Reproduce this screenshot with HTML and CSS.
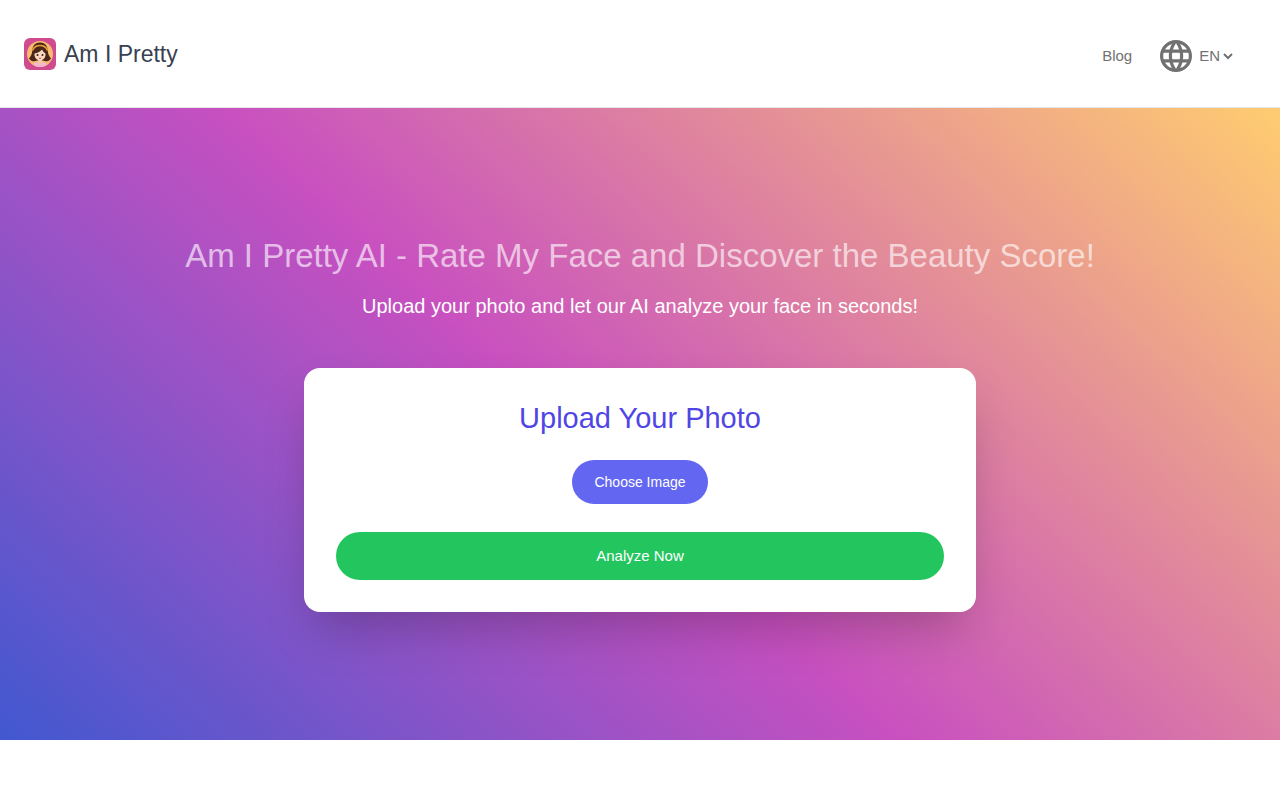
FILE: index.html
```html
<!doctype html>
<html lang="en">
<head>
  <meta charset="utf-8">
  <meta name="viewport" content="width=device-width, initial-scale=1">
  <title>Am I Pretty</title>
  <link rel="stylesheet" href="styles.css">
</head>
<body>
<header class="header">
  <a class="brand" href="#">
    <svg class="brand-logo" viewBox="0 0 32 32" aria-hidden="true">
      <rect width="32" height="32" rx="6" fill="#cf4b8d"/>
      <circle cx="16" cy="16" r="13" fill="#f6ba70"/>
      <path d="M16 4.500C10.500 4.500 8.500 8.500 8.300 12.500C8 16.500 7 18 5 20.500C7 23.500 10.500 24 13 22.500H19C21.500 24 25 23.500 27 20.500C25 18 24 16.500 23.700 12.500C23.500 8.500 21.500 4.500 16 4.500Z" fill="#4a2618"/>
      <path d="M14 20h4v4l5 2q-2 3-7 3t-7-3l5-2z" fill="#f4c3a8"/>
      <path d="M9 26l4-2 3 3 3-3 4 2q-2 3-7 3t-7-3z" fill="#f3b6d2"/>
      <path d="M10.500 15.500Q15 15 18 11.500Q19 14 21.500 15.500V17.500Q20.500 22 16 22.500Q11.500 22 10.500 17.500Z" fill="#fbd9bf"/>
      <path d="M8.500 12.500Q10.500 7.500 16 7.500T23.500 12.500" fill="none" stroke="#eda53e" stroke-width="1.500"/>
      <circle cx="13.500" cy="17" r="1" fill="#3a1c14"/>
      <circle cx="18.500" cy="17" r="1" fill="#3a1c14"/>
      <path d="M14.800 20q1.200 1 2.400 0" fill="none" stroke="#cf4b5d"/>
    </svg>
    <span class="brand-name">Am I Pretty</span>
  </a>
  <nav class="nav">
    <a class="nav-link" href="#">Blog</a>
    <button class="lang" type="button" aria-label="Language: EN">
      <svg class="lang-globe" viewBox="2 2 20 20" aria-hidden="true">
        <path fill="currentColor" d="M11.990 2C6.470 2 2 6.480 2 12s4.470 10 9.990 10C17.520 22 22 17.520 22 12S17.520 2 11.990 2zm6.930 6h-2.950c-.32-1.250-.78-2.450-1.380-3.560 1.840.63 3.370 1.910 4.330 3.560zM12 4.040c.83 1.200 1.480 2.530 1.910 3.960h-3.820c.43-1.430 1.080-2.760 1.910-3.960zM4.260 14C4.100 13.360 4 12.690 4 12s.1-1.360.26-2h3.380c-.08.66-.14 1.320-.14 2s.06 1.340.14 2H4.260zm.82 2h2.950c.32 1.250.78 2.450 1.380 3.560-1.840-.63-3.370-1.900-4.330-3.560zm2.950-8H5.080c.96-1.660 2.490-2.930 4.330-3.560C8.810 5.550 8.350 6.750 8.030 8zM12 19.960c-.83-1.200-1.480-2.530-1.910-3.960h3.820c-.43 1.430-1.080 2.760-1.910 3.960zM14.340 14H9.660c-.09-.66-.16-1.320-.16-2s.07-1.350.16-2h4.680c.09.65.16 1.320.16 2s-.07 1.340-.16 2zm.25 5.560c.6-1.110 1.060-2.310 1.380-3.560h2.950c-.96 1.650-2.490 2.930-4.330 3.560zM16.360 14c.08-.66.14-1.320.14-2s-.06-1.340-.14-2h3.380c.16.64.26 1.310.26 2s-.1 1.360-.26 2h-3.380z"/>
      </svg>
      <span>EN</span>
      <svg class="lang-arrow" viewBox="0 0 16 16" aria-hidden="true">
        <path d="M4 6l4 4 4-4" fill="none" stroke="currentColor" stroke-width="2"/>
      </svg>
    </button>
  </nav>
</header>

<main class="hero">
  <h1 class="hero-title">Am I Pretty AI - Rate My Face and Discover the Beauty Score!</h1>
  <p class="hero-text">Upload your photo and let our AI analyze your face in seconds!</p>
  <section class="card">
    <h2 class="card-title">Upload Your Photo</h2>
    <button class="btn btn-choose" type="button">Choose Image</button>
    <button class="btn btn-analyze" type="button">Analyze Now</button>
  </section>
</main>
</body>
</html>
```
FILE: styles.css
```css
*{box-sizing:border-box;margin:0;padding:0;}
body{font-family:"Liberation Sans",Arial,sans-serif;font-size:15px;line-height:24px;background:#fff;color:#374151;}
a{color:inherit;text-decoration:none;}
button{font:inherit;border:0;background:none;cursor:pointer;}
h1,h2{font-weight:400;}
svg{display:block;flex:none;}

.header{display:flex;align-items:center;justify-content:space-between;min-height:108px;padding:0 44px 0 24px;border-bottom:1px solid #e5e7eb;}
.brand{display:flex;align-items:center;gap:8px;}
.brand-logo{width:32px;height:32px;}
.brand-name{font-size:23px;line-height:32px;}
.nav{display:flex;align-items:center;gap:28px;padding-top:4px;color:#717171;}
.lang{display:flex;align-items:center;color:inherit;}
.lang-globe{width:32px;height:32px;margin-right:7px;}
.lang-arrow{width:16px;height:16px;}

.hero{display:flex;flex-direction:column;align-items:center;padding:128px 16px;text-align:center;color:#fff;background:linear-gradient(43deg,#4158d0 0%,#c850c0 46%,#ffcc70 100%);}
.hero-title{margin-bottom:16px;font-size:33px;line-height:40px;color:rgba(255,255,255,.64);}
.hero-text{margin-bottom:48px;font-size:20px;line-height:28px;}

.card{display:flex;flex-direction:column;align-items:center;width:100%;max-width:672px;padding:32px;border-radius:16px;background:#fff;box-shadow:0 25px 50px -12px rgba(0,0,0,.25);}
.card-title{margin-bottom:24px;font-size:29px;line-height:36px;color:#4f46e5;}
.btn{border-radius:24px;color:#fff;}
.btn-choose{margin-bottom:28px;padding:12px 22px;font-size:14px;line-height:20px;background:#6366f1;}
.btn-analyze{width:100%;padding:12px 24px;background:#22c55e;}
```
